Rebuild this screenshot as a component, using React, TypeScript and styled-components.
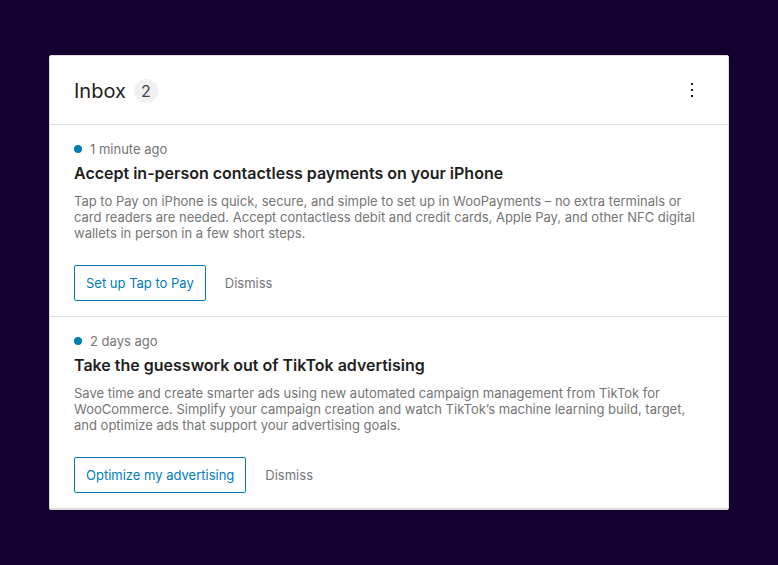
import styled, { createGlobalStyle } from "styled-components";

const GlobalStyle = createGlobalStyle`
  html, body {
    margin: 0;
    padding: 0;
    background: #130230;
  }
  * {
    box-sizing: border-box;
  }
`;

type Note = {
  time: string;
  title: string;
  body: string;
  action: string;
};

const notes: Note[] = [
  {
    time: "1 minute ago",
    title: "Accept in-person contactless payments on your iPhone",
    body: "Tap to Pay on iPhone is quick, secure, and simple to set up in WooPayments – no extra terminals or card readers are needed. Accept contactless debit and credit cards, Apple Pay, and other NFC digital wallets in person in a few short steps.",
    action: "Set up Tap to Pay",
  },
  {
    time: "2 days ago",
    title: "Take the guesswork out of TikTok advertising",
    body: "Save time and create smarter ads using new automated campaign management from TikTok for WooCommerce. Simplify your campaign creation and watch TikTok’s machine learning build, target, and optimize ads that support your advertising goals.",
    action: "Optimize my advertising",
  },
];

const App = () => {
  return (
    <Page>
      <GlobalStyle />
      <Card>
        <Header>
          <Title>
            Inbox <Count>2</Count>
          </Title>
          <MenuButton aria-label="More options">
            <svg width="24" height="24" viewBox="0 0 24 24" fill="#1e1e1e">
              <rect x="11" y="5" width="2" height="2" />
              <rect x="11" y="11" width="2" height="2" />
              <rect x="11" y="17" width="2" height="2" />
            </svg>
          </MenuButton>
        </Header>
        {notes.map((n) => (
          <Item key={n.title}>
            <Meta>
              <Dot />
              {n.time}
            </Meta>
            <ItemTitle>{n.title}</ItemTitle>
            <Body>{n.body}</Body>
            <Actions>
              <PrimaryButton>{n.action}</PrimaryButton>
              <TertiaryButton>Dismiss</TertiaryButton>
            </Actions>
          </Item>
        ))}
      </Card>
    </Page>
  );
};

export default App;

const Page = styled.div`
  width: 778px;
  height: 565px;
  padding: 55px 49px 0 49px;
  font-family: Inter, "Noto Sans", sans-serif;
`;

const Card = styled.div`
  width: 680px;
  background: #fff;
  border: 1px solid #dddddd;
  border-radius: 2px;
  overflow: hidden;
`;

const Header = styled.div`
  height: 69px;
  display: flex;
  align-items: center;
  justify-content: space-between;
  padding: 2px 24px 0;
  border-bottom: 1px solid #e0e0e0;
`;

const Title = styled.div`
  display: flex;
  align-items: center;
  gap: 8px;
  font-size: 20px;
  color: #1e1e1e;
  line-height: 24px;
`;

const Count = styled.span`
  display: inline-flex;
  align-items: center;
  justify-content: center;
  width: 24px;
  height: 24px;
  border-radius: 50%;
  background: #f0f0f0;
  font-size: 16px;
  color: #3c434a;
`;

const MenuButton = styled.button`
  border: 0;
  background: none;
  padding: 0;
  margin-top: -2px;
  width: 24px;
  height: 24px;
  display: flex;
  cursor: pointer;
`;

const Item = styled.div`
  padding: 16px 24px 15px;
  border-bottom: 1px solid #e0e0e0;
`;

const Meta = styled.div`
  display: flex;
  align-items: center;
  gap: 8px;
  font-size: 13px;
  line-height: 16px;
  color: #757575;
`;

const Dot = styled.span`
  width: 8px;
  height: 8px;
  border-radius: 50%;
  background: #007cba;
`;

const ItemTitle = styled.div`
  margin-top: 4px;
  font-size: 16px;
  line-height: 24px;
  font-weight: 600;
  color: #1e1e1e;
`;

const Body = styled.div`
  margin-top: 8px;
  font-size: 13px;
  line-height: 16px;
  color: #757575;
`;

const Actions = styled.div`
  margin-top: 24px;
  display: flex;
  align-items: center;
  gap: 7px;
`;

const PrimaryButton = styled.button`
  height: 36px;
  padding: 0 11px;
  border: 1px solid #007cba;
  border-radius: 2px;
  background: #fff;
  color: #007cba;
  font-family: inherit;
  font-size: 13px;
  cursor: pointer;
`;

const TertiaryButton = styled.button`
  height: 36px;
  padding: 0 12px;
  border: 0;
  background: none;
  color: #757575;
  font-family: inherit;
  font-size: 13px;
  cursor: pointer;
`;
